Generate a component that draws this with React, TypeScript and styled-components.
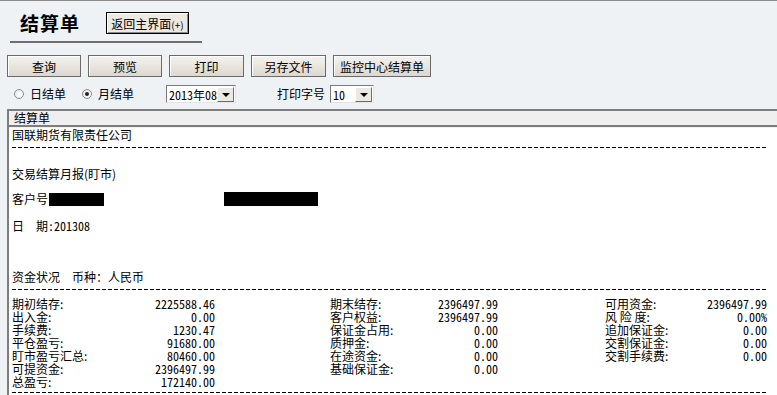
import React from "react";
import styled, { createGlobalStyle } from "styled-components";

const GlobalStyle = createGlobalStyle`
  html, body {
    margin: 0;
    padding: 0;
  }
  body {
    background: #eef2f5;
    font-family: "Noto Sans CJK SC", "Liberation Sans", sans-serif;
    font-size: 12px;
    color: #000;
  }
`;

const Page = styled.div`
  width: 777px;
  height: 395px;
  overflow: hidden;
  box-sizing: border-box;
  border-top: 1px solid #8c8c8c;
  background: #eef2f5;
`;

// Top: title with underline
const Header = styled.div`
  display: flex;
  align-items: center;
  box-sizing: border-box;
  margin-left: 10px;
  width: 192px;
  height: 42px;
  padding: 4px 0 0 10px;
  border-bottom: 2px solid #6f6f6f;
`;

const Title = styled.h1`
  margin: 0;
  font-size: 19px;
  font-weight: bold;
  letter-spacing: 1px;
  line-height: 22px;
`;

const BackButton = styled.button`
  margin-left: 26px;
  height: 22px;
  width: 83px;
  padding: 0;
  font-family: inherit;
  font-size: 12px;
  color: #000;
  background: #ece9e2;
  border: 1px solid #000;
  box-shadow: inset 1px 1px 0 #fff, inset -1px -1px 0 #8a8a8a;

  small {
    font-size: 10px;
  }
`;

// Action buttons
const Toolbar = styled.div`
  display: flex;
  gap: 7px;
  margin-top: 12px;
  padding-left: 7px;
`;

const ToolButton = styled.button<{ $w: number }>`
  width: ${(p) => p.$w}px;
  height: 22px;
  padding: 0;
  font-family: inherit;
  font-size: 12px;
  color: #000;
  background: linear-gradient(#f5f3ee, #dcd8cf);
  border: 1px solid #6a6a6a;
  box-shadow: inset 1px 1px 0 #fff;
`;

// Options row
const Options = styled.div`
  display: flex;
  align-items: center;
  height: 18px;
  margin-top: 8px;
  padding-left: 14px;
`;

const Radio = styled.span<{ $checked?: boolean; $gap?: number }>`
  position: relative;
  display: inline-block;
  box-sizing: border-box;
  width: 10px;
  height: 10px;
  margin-left: ${(p) => p.$gap || 0}px;
  border-radius: 50%;
  border: 1px solid #8d8d8d;
  background: radial-gradient(circle at 60% 60%, #fff, #e4e4e4);
  &::after {
    content: "";
    display: ${(p) => (p.$checked ? "block" : "none")};
    position: absolute;
    left: 2px;
    top: 2px;
    width: 4px;
    height: 4px;
    border-radius: 50%;
    background: #222;
  }
`;

const OptLabel = styled.span<{ $gap?: number }>`
  margin-left: ${(p) => p.$gap || 0}px;
  line-height: 18px;
`;

const Select = styled.div<{ $w: number; $gap: number }>`
  display: flex;
  align-items: center;
  justify-content: space-between;
  box-sizing: border-box;
  width: ${(p) => p.$w}px;
  height: 18px;
  margin-left: ${(p) => p.$gap}px;
  padding: 0 1px 0 2px;
  background: #fff;
  border-top: 1px solid #7a7a7a;
  border-left: 1px solid #7a7a7a;
  border-bottom: 1px solid #e4e4e4;
  border-right: 1px solid #e4e4e4;
  font-family: "Noto Sans Mono CJK SC", "Noto Sans CJK SC", monospace;
  font-size: 12px;
`;

const Arrow = styled.span`
  position: relative;
  box-sizing: border-box;
  width: 17px;
  height: 15px;
  background: #ece9e2;
  border: 1px solid;
  border-color: #fff #6c6c6c #6c6c6c #fff;
  &::after {
    content: "";
    position: absolute;
    left: 4px;
    top: 5px;
    border-left: 4px solid transparent;
    border-right: 4px solid transparent;
    border-top: 4px solid #000;
  }
`;

// Report panel
const Panel = styled.div`
  margin: 6px 0 0 7px;
  border-left: 2px solid #7d7d7d;
`;

const PanelHead = styled.div`
  height: 14px;
  line-height: 14px;
  padding-left: 5px;
  background: #efefef;
  border-top: 2px solid #7d7d7d;
  border-bottom: 2px solid #7d7d7d;
`;

const Report = styled.div`
  background: #fff;
  padding: 0 10px 20px 3px;
`;

const Line = styled.div<{ $top: number }>`
  margin-top: ${(p) => p.$top}px;
  height: 14px;
  line-height: 14px;
  white-space: nowrap;
  display: flex;
  align-items: center;
`;

const Dashes = styled.div<{ $top: number }>`
  margin-top: ${(p) => p.$top}px;
  height: 1px;
  background: repeating-linear-gradient(to right, #000 0 4px, transparent 4px 6px);
`;

const Redact = styled.span<{ $w: number; $gap: number; $h: number }>`
  display: inline-block;
  width: ${(p) => p.$w}px;
  height: ${(p) => p.$h}px;
  margin-left: ${(p) => p.$gap}px;
  background: #000;
`;

const Mono = styled.span`
  font-family: "Noto Sans Mono CJK SC", "DejaVu Sans Mono", monospace;
`;

const DataGrid = styled.div`
  display: grid;
  grid-template-columns: 318px 275px 162px;
  margin-top: 7px;
`;

const Column = styled.div<{ $w: number }>`
  width: ${(p) => p.$w}px;
`;

const Row = styled.div`
  display: flex;
  justify-content: space-between;
  height: 13px;
  line-height: 13px;
  white-space: pre;
`;

const Value = styled.span`
  font-family: "Noto Sans Mono CJK SC", "DejaVu Sans Mono", monospace;
  font-size: 12px;
`;

const columns: { w: number; rows: [string, string][] }[] = [
  {
    w: 203,
    rows: [
      ["期初结存:", "2225588.46"],
      ["出入金:", "0.00"],
      ["手续费:", "1230.47"],
      ["平仓盈亏:", "91680.00"],
      ["盯市盈亏汇总:", "80460.00"],
      ["可提资金:", "2396497.99"],
      ["总盈亏:", "172140.00"],
    ],
  },
  {
    w: 168,
    rows: [
      ["期末结存:", "2396497.99"],
      ["客户权益:", "2396497.99"],
      ["保证金占用:", "0.00"],
      ["质押金:", "0.00"],
      ["在途资金:", "0.00"],
      ["基础保证金:", "0.00"],
    ],
  },
  {
    w: 162,
    rows: [
      ["可用资金:", "2396497.99"],
      ["风 险 度:", "0.00%"],
      ["追加保证金:", "0.00"],
      ["交割保证金:", "0.00"],
      ["交割手续费:", "0.00"],
    ],
  },
];

const tools = [
  { label: "查询", w: 74 },
  { label: "预览", w: 74 },
  { label: "打印", w: 75 },
  { label: "另存文件", w: 75 },
  { label: "监控中心结算单", w: 98 },
];

export default function App() {
  return (
    <Page>
      <GlobalStyle />
      <Header>
        <Title>结算单</Title>
        <BackButton>
          返回主界面<small>(+)</small>
        </BackButton>
      </Header>

      <Toolbar>
        {tools.map((t) => (
          <ToolButton key={t.label} $w={t.w}>
            {t.label}
          </ToolButton>
        ))}
      </Toolbar>

      <Options>
        <Radio />
        <OptLabel $gap={6}>日结单</OptLabel>
        <Radio $checked $gap={16} />
        <OptLabel $gap={6}>月结单</OptLabel>
        <Select $w={70} $gap={32}>
          <span>2013年08</span>
          <Arrow />
        </Select>
        <OptLabel $gap={41}>打印字号</OptLabel>
        <Select $w={44} $gap={5}>
          <span>10</span>
          <Arrow />
        </Select>
      </Options>

      <Panel>
        <PanelHead>结算单</PanelHead>
        <Report>
          <Line $top={1}>国联期货有限责任公司</Line>
          <Dashes $top={5} />
          <Line $top={19}>交易结算月报(盯市)</Line>
          <Line $top={11}>
            客户号
            <Redact $w={55} $h={13} $gap={1} />
            <Redact $w={94} $h={14} $gap={120} />
          </Line>
          <Line $top={13}>
            日　期<Mono>:201308</Mono>
          </Line>
          <Line $top={37}>资金状况　币种：人民币</Line>
          <Dashes $top={5} />
          <DataGrid>
            {columns.map((c, i) => (
              <Column key={i} $w={c.w}>
                {c.rows.map(([label, value]) => (
                  <Row key={label}>
                    <span>{label}</span>
                    <Value>{value}</Value>
                  </Row>
                ))}
              </Column>
            ))}
          </DataGrid>
          <Dashes $top={4} />
        </Report>
      </Panel>
    </Page>
  );
}
